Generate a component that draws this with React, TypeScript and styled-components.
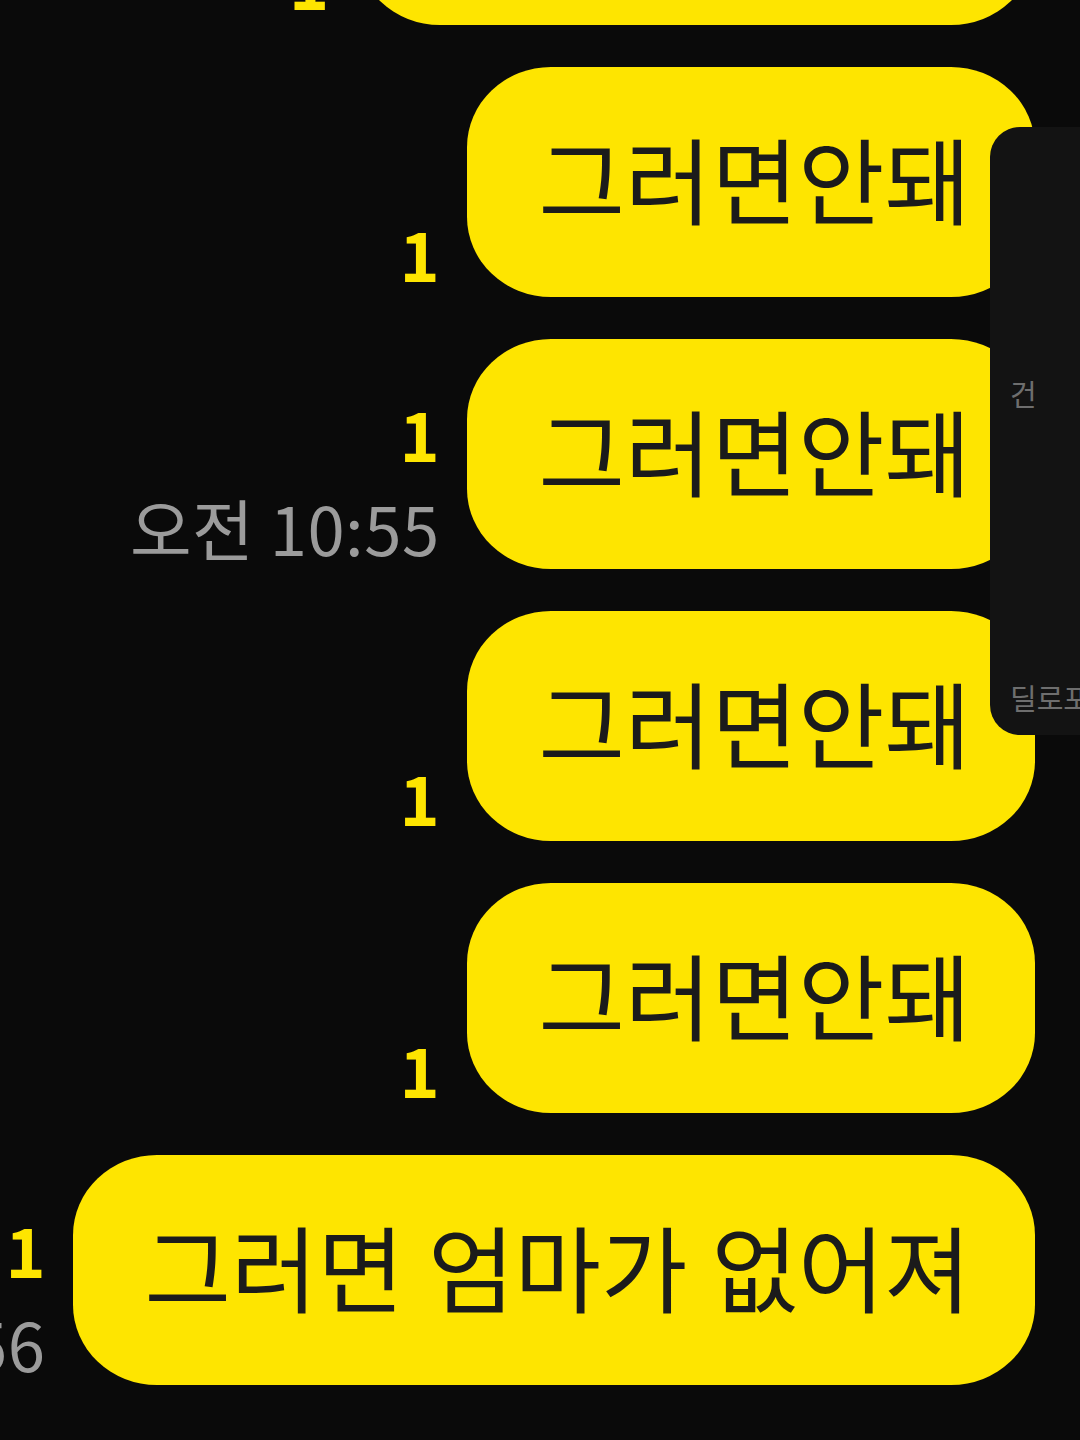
import React from "react";
import styled, { createGlobalStyle } from "styled-components";

const GlobalStyle = createGlobalStyle`
    html, body {
        margin: 0;
        padding: 0;
        background-color: #0a0a0a;
        overflow: hidden;
    }
    body {
        font-family: "Noto Sans CJK KR", "Noto Sans", sans-serif;
    }
`;

const Screen = styled.div`
    position: relative;
    width: 1080px;
    height: 1440px;
    overflow: hidden;
    background-color: #0a0a0a;
`;

const Messages = styled.div`
    height: 100%;
    box-sizing: border-box;
    display: flex;
    flex-direction: column;
    justify-content: flex-end;
    gap: 42px;
    padding: 0 45px 55px 0;
`;

const Row = styled.div`
    display: flex;
    flex-direction: row;
    justify-content: flex-end;
    align-items: flex-end;
    gap: 27px;
    flex-shrink: 0;
`;

const Meta = styled.div`
    display: flex;
    flex-direction: column;
    align-items: flex-end;
    gap: 26px;
    flex-shrink: 0;
    white-space: nowrap;
`;

const ReadCount = styled.span<{ $last: boolean }>`
    color: #fee500;
    font-size: 68px;
    font-weight: 700;
    line-height: 1;
    padding-bottom: ${({ $last }) => ($last ? "10px" : "0")};
`;

const Time = styled.span`
    color: #9b9b9b;
    font-size: 67px;
    font-weight: 400;
    line-height: 1;
    padding-bottom: 9px;
    letter-spacing: 0.5px;
`;

const Bubble = styled.div`
    flex-shrink: 0;
    height: 230px;
    box-sizing: border-box;
    display: flex;
    align-items: center;
    padding: 0 64px 10px 72px;
    border-radius: 84px / 80px;
    background-color: #fee500;
    color: #1b1b1b;
    font-size: 94px;
    font-weight: 400;
    white-space: nowrap;
    word-spacing: 3px;
`;

const SidePanel = styled.div`
    position: absolute;
    top: 127px;
    left: 990px;
    width: 140px;
    height: 608px;
    box-sizing: border-box;
    display: flex;
    flex-direction: column;
    padding: 245px 0 16px 20px;
    border-radius: 30px;
    background-color: #131313;
    color: #6e6e6e;
    font-size: 29px;
    line-height: 43px;
    white-space: nowrap;
`;

const PanelLabel = styled.span<{ $bottom?: boolean }>`
    margin-top: ${({ $bottom }) => ($bottom ? "auto" : "0")};
`;

const messages = [
    { text: "그럼 안된다구", time: null },
    { text: "그러면안돼", time: null },
    { text: "그러면안돼", time: "오전 10:55" },
    { text: "그러면안돼", time: null },
    { text: "그러면안돼", time: null },
    { text: "그러면 엄마가 없어져", time: "오전 10:56" },
];

export default function App() {
    return (
        <Screen>
            <GlobalStyle />
            <Messages>
                {messages.map((m, i) => (
                    <Row key={i}>
                        <Meta>
                            <ReadCount $last={!m.time}>1</ReadCount>
                            {m.time && <Time>{m.time}</Time>}
                        </Meta>
                        <Bubble>{m.text}</Bubble>
                    </Row>
                ))}
            </Messages>
            <SidePanel>
                <PanelLabel>건</PanelLabel>
                <PanelLabel $bottom>딜로포인트</PanelLabel>
            </SidePanel>
        </Screen>
    );
}
